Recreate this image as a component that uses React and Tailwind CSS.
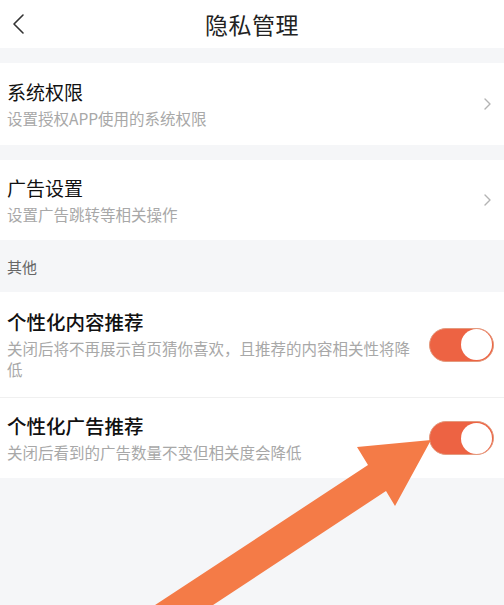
export default function App() {
  return (
    <div
      className="relative w-[504px] h-[605px] overflow-hidden bg-[#f5f6f8]"
      style={{ fontFamily: '"Noto Sans CJK SC", "Noto Sans", sans-serif' }}
    >
      {/* header */}
      <div className="grid grid-cols-[48px_1fr_48px] items-center h-[48px] bg-white">
        <div className="flex items-center pl-[12px]">
          <svg width="14" height="22" viewBox="0 0 14 22" fill="none">
            <path d="M11 2 L2 11 L11 20" stroke="#333" strokeWidth="1.6" strokeLinecap="round" strokeLinejoin="round" />
          </svg>
        </div>
        <div className="text-center text-[23px] leading-[30px] text-[#222] tracking-[0.5px]">隐私管理</div>
        <div />
      </div>

      <div className="h-[15px]" />

      <LinkRow height="h-[82px]" title="系统权限" sub="设置授权APP使用的系统权限" />

      <div className="h-[15px]" />

      <LinkRow height="h-[80px]" title="广告设置" sub="设置广告跳转等相关操作" />

      <div className="flex items-center h-[52px] px-[7px] pt-[3px] text-[15px] text-[#666]">其他</div>

      <ToggleRow
        height="h-[105px]"
        title="个性化内容推荐"
        sub="关闭后将不再展示首页猜你喜欢，且推荐的内容相关性将降低"
      />
      <div className="h-px bg-[#f0f0f0]" />
      <ToggleRow height="h-[80px]" title="个性化广告推荐" sub="关闭后看到的广告数量不变但相关度会降低" />

      {/* annotation arrow */}
      <svg className="absolute left-0 top-0" width="504" height="605" viewBox="0 0 504 605">
        <polygon
          points="149,609 368,465 357,447 431,440 395,506 386,491 207,609"
          fill="#f47b47"
        />
      </svg>
    </div>
  );
}

function LinkRow({ height, title, sub }) {
  return (
    <div className={`flex items-center justify-between bg-white pl-[7px] pr-[12px] ${height}`}>
      <div className="flex flex-col">
        <div className="text-[19px] leading-[26px] text-[#111]">{title}</div>
        <div className="mt-[3px] text-[15.5px] leading-[21px] text-[#a8a8a8]">{sub}</div>
      </div>
      <svg width="9" height="14" viewBox="0 0 9 14" fill="none">
        <path d="M2 2 L7 7 L2 12" stroke="#b3b3b3" strokeWidth="1.4" strokeLinecap="round" strokeLinejoin="round" />
      </svg>
    </div>
  );
}

function ToggleRow({ height, title, sub }) {
  return (
    <div className={`flex items-center justify-between bg-white pl-[7px] pr-[10px] ${height}`}>
      <div className="flex flex-col w-[412px]">
        <div className="text-[19.5px] leading-[26px] text-[#111] font-medium">{title}</div>
        <div className="mt-[3px] text-[15.5px] leading-[21px] text-[#a8a8a8]">{sub}</div>
      </div>
      <div className="flex items-center justify-end w-[65px] h-[34px] rounded-full bg-[#ed6343] border border-[#e49a7e] p-[1px]">
        <div className="w-[31px] h-[31px] rounded-full bg-white" />
      </div>
    </div>
  );
}
